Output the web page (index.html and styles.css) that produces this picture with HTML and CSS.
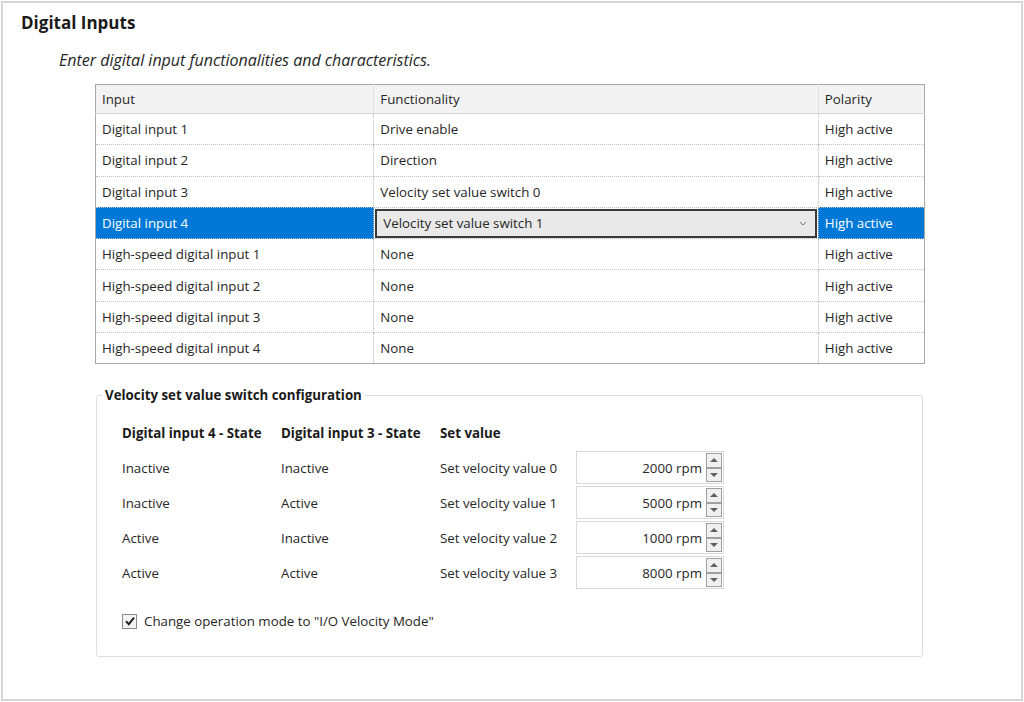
FILE: index.html
```html
<!DOCTYPE html>
<html>
<head>
<meta charset="utf-8">
<link rel="stylesheet" href="styles.css">
</head>
<body>
<div class="frame">
  <h1 class="title">Digital Inputs</h1>
  <p class="subtitle">Enter digital input functionalities and characteristics.</p>
  <table class="grid">
    <colgroup><col class="c1"><col class="c2"><col class="c3"></colgroup>
    <thead>
      <tr><th>Input</th><th>Functionality</th><th>Polarity</th></tr>
    </thead>
    <tbody>
      <tr><td>Digital input 1</td><td>Drive enable</td><td>High active</td></tr>
      <tr><td>Digital input 2</td><td>Direction</td><td>High active</td></tr>
      <tr><td>Digital input 3</td><td>Velocity set value switch 0</td><td>High active</td></tr>
      <tr class="sel"><td>Digital input 4</td><td class="combo-cell"><div class="combo"><span>Velocity set value switch 1</span><svg class="chev" width="8" height="5" viewBox="0 0 8 5"><path d="M1 1 L4 4 L7 1" fill="none" stroke="#777" stroke-width="1"/></svg></div></td><td>High active</td></tr>
      <tr><td>High-speed digital input 1</td><td>None</td><td>High active</td></tr>
      <tr><td>High-speed digital input 2</td><td>None</td><td>High active</td></tr>
      <tr><td>High-speed digital input 3</td><td>None</td><td>High active</td></tr>
      <tr><td>High-speed digital input 4</td><td>None</td><td>High active</td></tr>
    </tbody>
  </table>
  <fieldset class="group">
    <legend>Velocity set value switch configuration</legend>
    <div class="cfg">
      <div class="h">Digital input 4 - State</div><div class="h">Digital input 3 - State</div><div class="h">Set value</div><div></div>
      <div>Inactive</div><div>Inactive</div><div>Set velocity value 0</div>
      <div class="spin"><div class="box">2000 rpm</div><div class="btns"><div class="b up"></div><div class="b dn"></div></div></div>
      <div>Inactive</div><div>Active</div><div>Set velocity value 1</div>
      <div class="spin"><div class="box">5000 rpm</div><div class="btns"><div class="b up"></div><div class="b dn"></div></div></div>
      <div>Active</div><div>Inactive</div><div>Set velocity value 2</div>
      <div class="spin"><div class="box">1000 rpm</div><div class="btns"><div class="b up"></div><div class="b dn"></div></div></div>
      <div>Active</div><div>Active</div><div>Set velocity value 3</div>
      <div class="spin"><div class="box">8000 rpm</div><div class="btns"><div class="b up"></div><div class="b dn"></div></div></div>
    </div>
    <label class="check"><span class="cb"><svg width="12" height="12" viewBox="0 0 12 12"><path d="M2 6.3 L4.8 9.2 L10 2.6" fill="none" stroke="#222" stroke-width="2"/></svg></span>Change operation mode to "I/O Velocity Mode"</label>
  </fieldset>
</div>
</body>
</html>
```

FILE: styles.css
```css
* { box-sizing: border-box; }
html, body { margin: 0; padding: 0; background: #fff; }
body {
  font-family: "Open Sans", "Noto Sans", sans-serif;
  font-size: 13.3px;
  color: #262626;
}
.frame {
  margin: 1px;
  width: 1022px;
  height: 700px;
  border: 2px solid #d6d6d6;
  padding: 0;
}
.title {
  margin: 0;
  padding: 9px 0 0 18px;
  font-size: 17px;
  font-weight: 700;
  line-height: 22px;
  color: #1a1a1a;
}
.subtitle {
  margin: 0;
  padding: 15px 0 0 56px;
  font-size: 16px;
  font-style: italic;
  line-height: 22px;
  color: #262626;
}
.grid {
  margin: 13px 0 0 92px;
  border-collapse: collapse;
  border: 1px solid #a8a8a8;
  width: 830px;
  table-layout: fixed;
}
.c1 { width: 278px; }
.c2 { width: 444px; }
.c3 { width: 106px; }
.grid th {
  background: #f3f3f3;
  font-weight: 400;
  text-align: left;
  height: 29px;
  padding: 0 0 0 6px;
  border-bottom: 1px solid #d4d4d4;
  border-right: 1px solid #e2e2e2;
}
.grid td {
  height: 31.3px;
  padding: 0 0 0 6px;
  border-bottom: 1px dotted #bdbdbd;
  border-right: 1px dotted #bdbdbd;
  white-space: nowrap;
}
.grid tr:last-child td { border-bottom: none; }
.grid th:last-child, .grid td:last-child { border-right: none; }
.grid tr.sel td { background: #0078d7; color: #fff; }
.grid tr.sel td.combo-cell { background: #fff; padding: 0 1px; }
.combo {
  height: 29px;
  border: 2px solid #3a3a3a;
  background: #e9e9e9;
  color: #262626;
  display: flex;
  align-items: center;
  justify-content: space-between;
  padding: 0 8px 0 6px;
}
.chev { display: block; }
.group {
  margin: 22px 0 0 93px;
  width: 827px;
  height: 271px;
  border: 1px solid #d7e1e6;
  border-radius: 3px;
  padding: 0 0 0 25px;
}
.group legend {
  font-weight: 700;
  padding: 0 3px;
  margin-left: -20px;
  color: #1a1a1a;
}
.cfg {
  display: grid;
  grid-template-columns: 159px 159px 136px 148px;
  grid-template-rows: 30px repeat(4, 35px);
  align-items: center;
  margin-top: 16px;
}
.cfg .h { font-weight: 700; color: #1a1a1a; margin-top: -4px; }
.spin { display: flex; align-items: stretch; height: 33px; }
.box {
  width: 130px;
  border: 1px solid #d9d9d9;
  border-right: none;
  display: flex;
  align-items: center;
  justify-content: flex-end;
  padding-right: 4px;
}
.btns {
  width: 18px;
  border: 1px solid #d9d9d9;
  border-left: none;
  display: flex;
  flex-direction: column;
  padding: 1px 1px 1px 0;
}
.b {
  flex: 1;
  border: 1px solid #a0a0a0;
  background: #f0f0f0;
  position: relative;
}
.b::after {
  content: "";
  position: absolute;
  left: 50%;
  top: 50%;
  margin-left: -4px;
  width: 0; height: 0;
  border-left: 4px solid transparent;
  border-right: 4px solid transparent;
}
.up::after { border-bottom: 4px solid #606060; margin-top: -3px; }
.dn::after { border-top: 4px solid #606060; margin-top: -2px; }
.check {
  display: flex;
  align-items: center;
  gap: 7px;
  margin-top: 22px;
}
.cb {
  width: 15px; height: 15px;
  border: 1px solid #8a8a8a;
  background: #f4f4f4;
  display: flex;
  align-items: center;
  justify-content: center;
}
.cb svg { display: block; }
```
